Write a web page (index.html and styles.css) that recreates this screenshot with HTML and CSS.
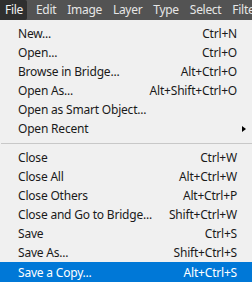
FILE: index.html
```html
<!DOCTYPE html>
<html lang="en">
<head>
  <meta charset="UTF-8" />
  <title>File menu</title>
  <link rel="stylesheet" href="styles.css">
</head>
<body>
  <div class="menubar">
    <span class="top-item active">File</span>
    <span class="top-item">Edit</span>
    <span class="top-item">Image</span>
    <span class="top-item">Layer</span>
    <span class="top-item">Type</span>
    <span class="top-item">Select</span>
    <span class="top-item">Filter</span>
  </div>

  <div class="menu">
    <div class="item"><span>New...</span><span class="key">Ctrl+N</span></div>
    <div class="item"><span>Open...</span><span class="key">Ctrl+O</span></div>
    <div class="item"><span>Browse in Bridge...</span><span class="key">Alt+Ctrl+O</span></div>
    <div class="item"><span>Open As...</span><span class="key">Alt+Shift+Ctrl+O</span></div>
    <div class="item"><span>Open as Smart Object...</span><span class="key"></span></div>
    <div class="item"><span>Open Recent</span><span class="arrow"></span></div>
    <div class="sep"></div>
    <div class="item"><span>Close</span><span class="key">Ctrl+W</span></div>
    <div class="item"><span>Close All</span><span class="key">Alt+Ctrl+W</span></div>
    <div class="item"><span>Close Others</span><span class="key">Alt+Ctrl+P</span></div>
    <div class="item"><span>Close and Go to Bridge...</span><span class="key">Shift+Ctrl+W</span></div>
    <div class="item"><span>Save</span><span class="key">Ctrl+S</span></div>
    <div class="item"><span>Save As...</span><span class="key">Shift+Ctrl+S</span></div>
    <div class="item selected"><span>Save a Copy...</span><span class="key">Alt+Ctrl+S</span></div>
  </div>
</body>
</html>
```

FILE: styles.css
```css
/* --- menu bar --- */
body {
  margin: 0;
  width: 252px;
  height: 282px;
  overflow: hidden;
  background: #f0f0f0;
  font-family: 'Noto Sans', sans-serif;
  font-size: 12px;
}

.menubar {
  display: flex;
  gap: 11px;
  height: 20px;
  background: #535353;
  color: #e6e6e6;
  white-space: nowrap;
  overflow: hidden;
  font-size: 12px;
  letter-spacing: -0.3px;
}
.top-item { line-height: 19px; flex-shrink: 0; }
.top-item.active {
  background: #2f2f2f;
  border-radius: 0 2px 2px 0;
  color: #f2f2f2;
  padding: 0 4px 0 5px;
  margin-right: -2px;
}

/* --- dropdown --- */
.menu { padding-top: 4px; color: #1a1a1a; letter-spacing: -0.2px; }
.item {
  display: flex;
  justify-content: space-between;
  align-items: center;
  height: 19px;
  padding: 0 15px 0 18px;
}
.item.selected { background: #0078d7; color: white; height: 20px; }
.arrow {
  width: 0; height: 0;
  border-left: 4px solid #000;
  border-top: 3.5px solid transparent;
  border-bottom: 3.5px solid transparent;
  margin-right: -9px;
}
.sep { height: 1px; background: #c8c8c8; margin: 5px 0 4px 1px; }
```
